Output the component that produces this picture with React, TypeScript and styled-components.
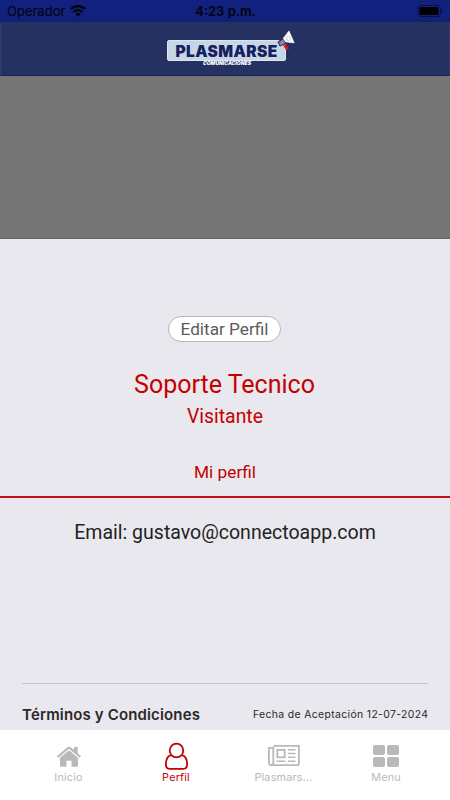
import React from "react";
import styled, { createGlobalStyle } from "styled-components";

const GlobalStyle = createGlobalStyle`
  * { box-sizing: border-box; }
  body { margin: 0; background: #e9e8ee; }
`;

const Screen = styled.div`
  width: 450px;
  height: 800px;
  display: flex;
  flex-direction: column;
  overflow: hidden;
  background: #e9e8ee;
  font-family: Inter, sans-serif;
`;

const StatusBar = styled.header`
  height: 22px;
  flex: none;
  display: grid;
  grid-template-columns: 1fr auto 1fr;
  align-items: center;
  padding: 0 6px 0 7px;
  background: linear-gradient(#11217d 0 18px, #112069 22px);
  color: #020408;
  font-size: 13px;
  line-height: 22px;
`;

const Carrier = styled.div`
  display: flex;
  align-items: center;
  gap: 5px;
`;

const Clock = styled.div`
  font-weight: 600;
`;

const Battery = styled.svg`
  justify-self: end;
`;

const Header = styled.div`
  height: 54px;
  flex: none;
  display: flex;
  justify-content: center;
  background: #243161;
  border: 1px solid #303c6f;
  border-top: 0;
  border-bottom: 1px solid #17205c;
  padding-top: 8px;
`;

const Brand = styled.div`
  width: 128px;
  height: 40px;
  position: relative;
  left: 6px;
  padding-top: 10px;
`;

const BrandPlate = styled.div`
  width: 119px;
  height: 21px;
  border-radius: 2px;
  background: #c8d5e5;
  border: 1px solid #dce6f2;
  color: #14205f;
  font-size: 15.5px;
  font-weight: 900;
  line-height: 21px;
  text-align: center;
  white-space: nowrap;
  letter-spacing: 0.4px;
`;

const BrandSub = styled.div`
  width: 119px;
  padding-left: 1px;
  color: #fff;
  font-size: 5px;
  font-weight: 900;
  font-style: italic;
  line-height: 5px;
  text-align: center;
`;

const Megaphone = styled.svg`
  position: absolute;
  top: 0;
  right: 0;
`;

const Cover = styled.div`
  height: 163px;
  flex: none;
  background: #757576;
  border-bottom: 1px solid #626167;
`;

const Profile = styled.main`
  flex: 1;
  display: flex;
  flex-direction: column;
  align-items: center;
  padding-top: 77px;
  font-family: Roboto, sans-serif;
  color: #c40000;
`;

const EditButton = styled.button`
  width: 113px;
  height: 26px;
  margin-right: 1px;
  padding: 0;
  border: 1px solid #b5b5b8;
  border-radius: 13px;
  background: #fff;
  color: #5c5c5c;
  font: 17.2px/22px Roboto, sans-serif;
`;

const Name = styled.h1`
  margin: 28px 1px 0 0;
  font-size: 25px;
  font-weight: 400;
  line-height: 30px;
`;

const Role = styled.div`
  margin-top: 4px;
  font-size: 19.4px;
  line-height: 25px;
`;

const Tab = styled.div`
  width: 100%;
  margin-top: 30px;
  height: 39px;
  border-bottom: 2px solid #c40d14;
  font-size: 17.3px;
  line-height: 26px;
  text-align: center;
`;

const Email = styled.div`
  margin-top: 22px;
  color: #222;
  font-size: 19.55px;
  line-height: 26px;
`;

const Terms = styled.section`
  height: 47px;
  flex: none;
  margin: 0 22px;
  border-top: 1px solid #c5c4ca;
  display: flex;
  justify-content: space-between;
  align-items: center;
  padding-top: 15px;
`;

const TermsTitle = styled.div`
  color: #292929;
  font-size: 15px;
  font-weight: 600;
  letter-spacing: 0.15px;
`;

const TermsDate = styled.div`
  color: #292929;
  font-size: 10.4px;
  letter-spacing: 0.37px;
  margin-right: -0.3px;
`;

const Nav = styled.nav`
  height: 70px;
  flex: none;
  display: grid;
  grid-template-columns: 137px 78px 137px 68px;
  background: #fff;
`;

const NavItem = styled.a<{ $active?: boolean }>`
  display: flex;
  flex-direction: column;
  align-items: center;
  padding-top: 12px;
  color: ${(p) => (p.$active ? "#c40000" : "#b9b9b9")};
  font-size: 10.8px;
  line-height: 15px;
  letter-spacing: 0.2px;
`;

export default function App() {
  return (
    <>
      <GlobalStyle />
      <Screen>
        <StatusBar>
          <Carrier>
            Operador
            <svg width="16" height="12" viewBox="0 0 16 12" fill="none" stroke="currentColor">
              <path d="M.8 4C4.9.1 11.1.1 15.2 4M3.5 6.9c2.6-2.5 6.4-2.5 9 0" strokeWidth="2.2" />
              <path d="M5.3 9Q8 6.6 10.7 9L8 11.8Z" fill="currentColor" stroke="none" />
            </svg>
          </Carrier>
          <Clock>4:23 p.m.</Clock>
          <Battery width="27" height="12" viewBox="0 0 27 12">
            <rect x="1" y=".5" width="22.5" height="11" rx="3" fill="none" stroke="#080f43" />
            <rect x="2.5" y="2" width="19" height="8" rx="1.5" fill="#000" />
            <path d="M25 4q2 2 0 4z" fill="#080f43" />
          </Battery>
        </StatusBar>
        <Header>
          <Brand>
            <BrandPlate>PLASMARSE</BrandPlate>
            <BrandSub>COMUNICACIONES</BrandSub>
            <Megaphone width="18" height="21" viewBox="0 0 18 21">
              <path d="M1 12l5-3 3 4-6 3z" fill="#8291b0" stroke="#17205c" />
              <path d="M1 11l2-1 1 2-2 1z" fill="#c62c38" />
              <path d="M12 .8L17.3 13 9 12 6 8.500z" fill="#fafafc" stroke="#fafafc" strokeWidth=".5" />
              <circle cx="11.5" cy="8.5" r="2" fill="none" stroke="#ddc7ce" />
              <path d="M6 15l3-1 3 5-3 1z" fill="#cf1c25" />
            </Megaphone>
          </Brand>
        </Header>
        <Cover />
        <Profile>
          <EditButton>Editar Perfil</EditButton>
          <Name>Soporte Tecnico</Name>
          <Role>Visitante</Role>
          <Tab>Mi perfil</Tab>
          <Email>Email: gustavo@connectoapp.com</Email>
        </Profile>
        <Terms>
          <TermsTitle>Términos y Condiciones</TermsTitle>
          <TermsDate>Fecha de Aceptación 12-07-2024</TermsDate>
        </Terms>
        <Nav>
          <NavItem>
            <svg width="26" height="28" viewBox="0 0 26 28" fill="currentColor">
              <path d="M13 8.200L22 15.800v7.700q0 1.200-1.200 1.200h-5.300v-6h-5v6H5.200Q4 24.700 4 23.500v-7.700z" />
              <path d="M1.600 15L11.700 6.300q1.300-1 2.600 0L24.400 15" fill="none" stroke="currentColor" strokeWidth="2.200" />
              <path d="M18 5h3.700v7.500L18 9.500z" />
            </svg>
            Inicio
          </NavItem>
          <NavItem $active>
            <svg width="26" height="28" viewBox="0 0 26 28" fill="none" stroke="currentColor" strokeWidth="1.8">
              <circle cx="13.5" cy="8.5" r="6.8" />
              <path d="M8.2 13.2C4.5 13.900 2.900 17.700 2.900 22.500q0 4.300 3.800 4.300h13.600q3.800 0 3.800-4.300c0-4.800-1.600-8.600-5.300-9.300" />
            </svg>
            Perfil
          </NavItem>
          <NavItem>
            <svg width="32" height="28" viewBox="0 0 32 28" fill="none" stroke="currentColor" strokeWidth="1.8">
              <path d="M5.3 3.900h25.600v17.600q0 1.600-1.600 1.600H3q-2.100 0-2.100-2V5.900h4.400v15q0 2-2.200 2" />
              <rect x="9.3" y="7.9" width="7.4" height="7.4" />
              <path d="M20 7.800h7.500M20 11.500h7.500M20 15.200h7.500M8.500 19.200h8.800M20 19.200h7.500" strokeWidth="1.6" />
            </svg>
            Plasmars...
          </NavItem>
          <NavItem>
            <svg width="26" height="28" viewBox="0 0 26 28" fill="currentColor">
              <rect y="3" width="12" height="10" rx="2" />
              <rect x="14" y="3" width="12" height="10" rx="2" />
              <rect y="15" width="12" height="10" rx="2" />
              <rect x="14" y="15" width="12" height="10" rx="2" />
            </svg>
            Menu
          </NavItem>
        </Nav>
      </Screen>
    </>
  );
}
